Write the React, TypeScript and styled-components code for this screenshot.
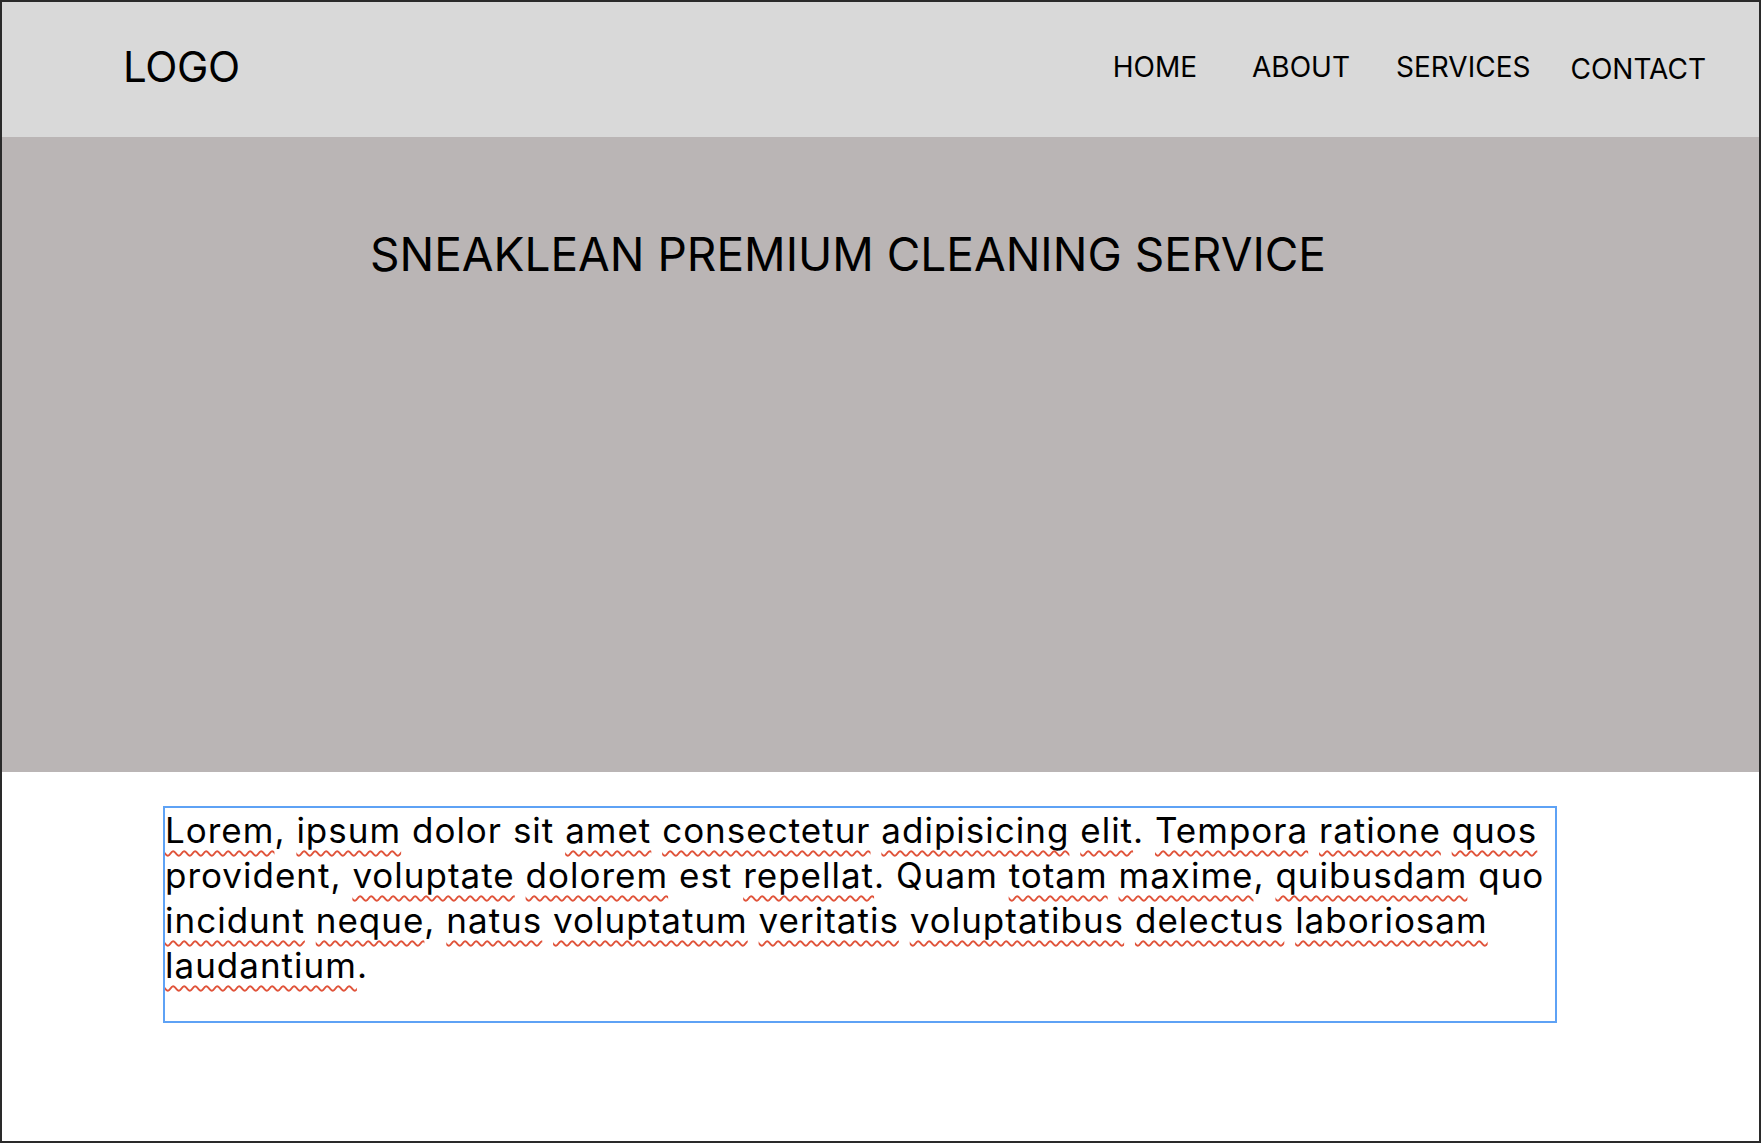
import React, {FC} from 'react';
import styled, {createGlobalStyle} from "styled-components";

const GlobalStyle = createGlobalStyle`
  html, body {
    margin: 0;
    padding: 0;
    background: #ffffff;
  }
  body {
    font-family: Inter, "Noto Sans", sans-serif;
    color: #000000;
  }
`;

const Frame = styled.div`
  width: 1761px;
  height: 1143px;
  box-sizing: border-box;
  border: 2px solid #2a2a2a;
  background: #ffffff;
  display: flex;
  flex-direction: column;
  overflow: hidden;
`;

const Header = styled.header`
  height: 135px;
  background: #d9d9d9;
  display: flex;
  align-items: flex-start;
  justify-content: space-between;
  padding: 0 53px 0 121px;
`;

const Logo = styled.div`
  font-size: 42px;
  line-height: 52px;
  margin-top: 39px;
  letter-spacing: -0.3px;
`;

const Nav = styled.nav`
  display: flex;
  align-items: flex-start;
  margin-top: 48px;
`;

const NavItem = styled.a<{ $offset?: number; $space?: number }>`
  font-size: 28px;
  line-height: 34px;
  margin-top: ${({$offset}) => $offset || 0}px;
  margin-left: ${({$space}) => $space || 0}px;
  color: #000000;
  text-decoration: none;
`;

const Hero = styled.section`
  height: 635px;
  background: #bab5b5;
  padding: 90px 0 0 368px;
  box-sizing: border-box;
`;

const HeroTitle = styled.h1`
  margin: 0;
  font-size: 46px;
  line-height: 54px;
  font-weight: 400;
`;

const TextBox = styled.div`
  margin: 34px 0 0 161px;
  width: 1394px;
  height: 217px;
  box-sizing: border-box;
  border: 2px solid #5ea2f5;
  font-size: 35px;
  line-height: 45px;
  letter-spacing: 1px;
  padding: 0;
`;

const Typo = styled.span`
  text-decoration: underline wavy #e0533a;
  text-decoration-thickness: 2px;
  text-decoration-skip-ink: none;
  text-underline-offset: 7px;
`;

const navItems = [
    {label: 'HOME', space: 0, offset: 0},
    {label: 'ABOUT', space: 55, offset: 0},
    {label: 'SERVICES', space: 46, offset: 0},
    {label: 'CONTACT', space: 40, offset: 2},
];

// words ending with * get the spell-check squiggle
const bodyText =
    'Lorem*, ipsum* dolor sit amet* consectetur* adipisicing* elit*. Tempora* ratione* quos* provident, voluptate* dolorem* est repellat*. Quam totam* maxime*, quibusdam* quo incidunt* neque*, natus* voluptatum* veritatis* voluptatibus* delectus* laboriosam* laudantium*.';

const Paragraph: FC<{ text: string }> = ({text}) => {
    const words = text.split(' ');
    return (
        <>
            {words.map((w, i) => {
                let node: React.ReactNode = w;
                if (w.includes('*')) {
                    const [word, rest] = w.split('*');
                    node = <><Typo>{word}</Typo>{rest}</>;
                }
                return <React.Fragment key={i}>{node}{i < words.length - 1 ? ' ' : ''}</React.Fragment>;
            })}
        </>
    );
};

const App: FC = () => {
    return (
        <>
            <GlobalStyle/>
            <Frame>
                <Header>
                    <Logo>LOGO</Logo>
                    <Nav>
                        {navItems.map(item => (
                            <NavItem key={item.label} href="#" $space={item.space} $offset={item.offset}>
                                {item.label}
                            </NavItem>
                        ))}
                    </Nav>
                </Header>
                <Hero>
                    <HeroTitle>SNEAKLEAN PREMIUM CLEANING SERVICE</HeroTitle>
                </Hero>
                <TextBox>
                    <Paragraph text={bodyText}/>
                </TextBox>
            </Frame>
        </>
    );
};

export default App;
